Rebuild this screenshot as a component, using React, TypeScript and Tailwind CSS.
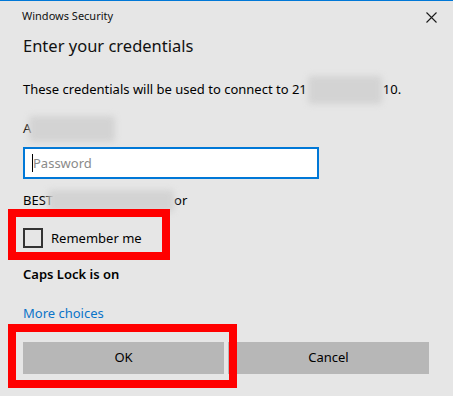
function Smudge({ className }: { className: string }) {
  return <span className={`inline-block shrink-0 rounded-sm bg-[#d3d3d3] blur-[3px] ${className}`} />;
}

function RedFrame({ className }: { className: string }) {
  return (
    <div className={`pointer-events-none absolute border-[8px] border-[#ff0000] ${className}`} />
  );
}

function CloseIcon() {
  return (
    <svg width="11" height="11" viewBox="0 0 11 11" className="text-[#1a1a1a]">
      <path d="M0.5 0.5 L10.5 10.5 M10.5 0.5 L0.5 10.5" stroke="currentColor" strokeWidth="1.1" />
    </svg>
  );
}

export default function App() {
  return (
    <div className="relative h-[396px] w-[453px] overflow-hidden bg-[#e6e6e6] text-black font-['Noto_Sans',sans-serif]">
      <div className="h-px bg-[#0078d7]" />
      <div className="flex h-[23px] items-end justify-between pl-[22px] pr-[16px]">
        <span className="text-[11px] leading-[16px] text-[#111]">Windows Security</span>
        <span className="mb-[1px]">
          <CloseIcon />
        </span>
      </div>

      <div className="px-[23px]">
        <h1 className="mt-[8px] h-[28px] text-[16.5px] leading-[28px] text-[#111]">
          Enter your credentials
        </h1>

        <p className="mt-[20px] flex h-[20px] items-center whitespace-nowrap text-[13px]">
          These credentials will be used to connect to 21
          <Smudge className="mx-[1px] h-[28px] w-[74px]" />
          10.
        </p>

        <div className="mt-[17px] flex h-[24px] items-center text-[13px]">
          <span>A</span>
          <Smudge className="-ml-[2px] h-[26px] w-[86px]" />
        </div>

        <div className="mt-[6px] flex h-[32px] w-[296px] items-center border-2 border-[#0078d7] bg-white pl-[7px]">
          <span className="h-[18px] w-px bg-black" />
          <span className="text-[13px] leading-[18px] text-[#8a8a8a]">Password</span>
        </div>

        <div className="mt-[12px] flex h-[20px] items-center whitespace-nowrap text-[13px]">
          <span>BEST</span>
          <Smudge className="-ml-[5px] h-[22px] w-[126px]" />
          <span>or</span>
        </div>

        <label className="mt-[17px] flex h-[20px] items-center gap-[8px]">
          <span className="h-[20px] w-[20px] border-2 border-[#333]" />
          <span className="text-[13px] leading-[20px]">Remember me</span>
        </label>

        <p className="mt-[16px] h-[20px] text-[13px] font-semibold leading-[20px]">Caps Lock is on</p>

        <p className="mt-[19px] h-[20px] text-[13px] leading-[20px] text-[#0a74c9]">More choices</p>

        <div className="mt-[19px] flex gap-[4px]">
          <button className="h-[32px] w-[201px] bg-[#b7b7b7] text-[13px]">OK</button>
          <button className="h-[32px] w-[201px] bg-[#b7b7b7] text-[13px]">Cancel</button>
        </div>
      </div>

      <RedFrame className="left-[8px] top-[209px] h-[51px] w-[162px]" />
      <RedFrame className="left-[8px] top-[324px] h-[64px] w-[229px]" />
    </div>
  );
}
